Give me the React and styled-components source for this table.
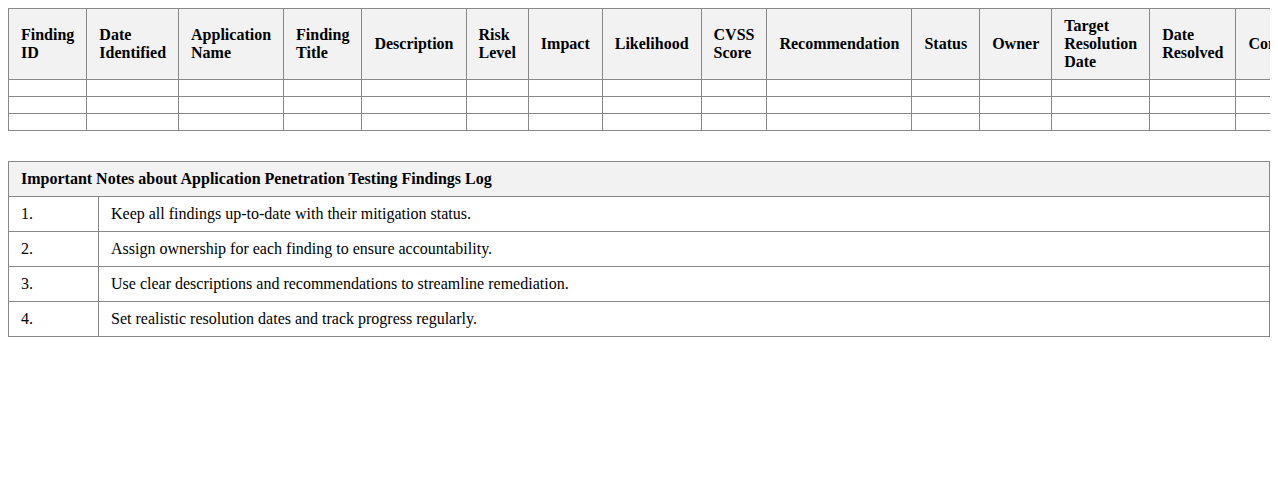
import styled, { createGlobalStyle } from "styled-components";

const GlobalStyle = createGlobalStyle`
  html {
    margin: 0;
    padding: 0;
    overflow-x: hidden;
    background: #ffffff;
  }
  body {
    margin: 8px;
    font-family: "Liberation Serif", "Times New Roman", serif;
    font-size: 16px;
    color: #000;
  }
`;

const Table = styled.table`
  border-collapse: collapse;
  width: 100%;
  margin-top: ${(p) => p.$gap || 0}px;
`;

const HeadCell = styled.th`
  border: 1px solid #888;
  background-color: #f2f2f2;
  padding: 8px 12px;
  text-align: left;
  vertical-align: middle;
  font-weight: bold;
  line-height: 18px;
`;

const Cell = styled.td`
  border: 1px solid #888;
  padding: 8px 12px;
  text-align: left;
  line-height: 18px;
  width: ${(p) => p.$width || "auto"};
`;

const columns = [
  "Finding ID",
  "Date Identified",
  "Application Name",
  "Finding Title",
  "Description",
  "Risk Level",
  "Impact",
  "Likelihood",
  "CVSS Score",
  "Recommendation",
  "Status",
  "Owner",
  "Target Resolution Date",
  "Date Resolved",
  "Comments",
];

const notes = [
  "Keep all findings up-to-date with their mitigation status.",
  "Assign ownership for each finding to ensure accountability.",
  "Use clear descriptions and recommendations to streamline remediation.",
  "Set realistic resolution dates and track progress regularly.",
];

const emptyRows = [0, 1, 2];

export default function App() {
  return (
    <>
      <GlobalStyle />
      <Table>
        <thead>
          <tr>
            {columns.map((col) => (
              <HeadCell key={col}>{col}</HeadCell>
            ))}
          </tr>
        </thead>
        <tbody>
          {emptyRows.map((r) => (
            <tr key={r}>
              {columns.map((col) => (
                <Cell key={col}></Cell>
              ))}
            </tr>
          ))}
        </tbody>
      </Table>

      <Table $gap={30}>
        <thead>
          <tr>
            <HeadCell colSpan={2}>
              Important Notes about Application Penetration Testing Findings Log
            </HeadCell>
          </tr>
        </thead>
        <tbody>
          {notes.map((note, i) => (
            <tr key={i}>
              <Cell $width="65px">{i + 1}.</Cell>
              <Cell>{note}</Cell>
            </tr>
          ))}
        </tbody>
      </Table>
    </>
  );
}
